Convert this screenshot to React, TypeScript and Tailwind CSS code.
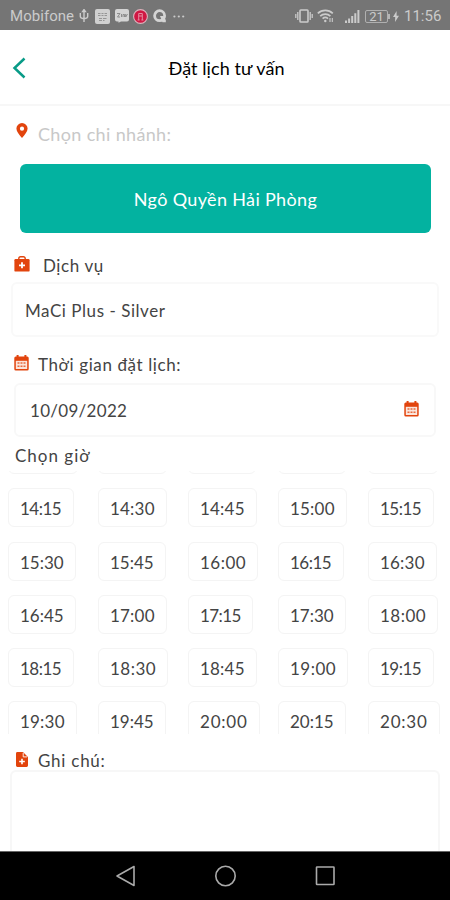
import type { ReactNode } from "react";
import clsx from "clsx";

interface Slot {
  readonly time: string;
  readonly size: string;
}

const XS = "w-[65px] tracking-[-0.6px]";
const SM = "w-[66px] tracking-[-0.5px]";
const MD = "w-[68px] tracking-[0px]";
const LG = "w-[69px] tracking-[0.2px]";
const XL = "w-[70px] tracking-[0.5px]";
const XXL = "w-[72px] tracking-[0.8px]";

const SLOT_ROWS: readonly (readonly Slot[])[] = [
  [
    { time: "", size: XL },
    { time: "", size: LG },
    { time: "", size: MD },
    { time: "", size: MD },
    { time: "", size: XL },
  ],
  [
    { time: "14:15", size: SM },
    { time: "14:30", size: LG },
    { time: "14:45", size: LG },
    { time: "15:00", size: LG },
    { time: "15:15", size: SM },
  ],
  [
    { time: "15:30", size: MD },
    { time: "15:45", size: MD },
    { time: "16:00", size: XL },
    { time: "16:15", size: SM },
    { time: "16:30", size: LG },
  ],
  [
    { time: "16:45", size: MD },
    { time: "17:00", size: LG },
    { time: "17:15", size: XS },
    { time: "17:30", size: MD },
    { time: "18:00", size: XL },
  ],
  [
    { time: "18:15", size: SM },
    { time: "18:30", size: XL },
    { time: "18:45", size: LG },
    { time: "19:00", size: XL },
    { time: "19:15", size: SM },
  ],
  [
    { time: "19:30", size: LG },
    { time: "19:45", size: MD },
    { time: "20:00", size: XXL },
    { time: "20:15", size: MD },
    { time: "20:30", size: XXL },
  ],
];

function StatusBar() {
  return (
    <header className="flex h-[30px] items-center bg-[#757575] pt-0.5 pl-[10px] font-[Roboto,sans-serif] text-[#cbcbcb]">
      <span className="w-[66px] text-[15px] leading-none tracking-[0.05px] whitespace-nowrap">Mobifone</span>
      <svg className="ml-[3px] h-[14px] w-[10px]" viewBox="0 0 10 14" fill="none" stroke="currentColor" strokeWidth="1.4">
        <path d="M5 1v12M1.3 4v3.5c0 1.5 1.5 2 3.7 2.3 2.2-.3 3.7-.8 3.7-2.3V4" />
        <path d="M3.6 2.6 5 .6l1.4 2z" fill="currentColor" />
      </svg>
      <svg className="ml-[6px] h-[15px] w-[15px]" viewBox="0 0 15 15">
        <rect width="15" height="15" rx="2" fill="#d0d0d0" />
        <path d="M3 4.5h2.5M6.5 4.5h2M9.5 4.5H12M3 6.5h2.5M6.5 6.5h2M9.5 6.5H12M4 9.5h3M4 11.5h3M8 9.5h3.5M8 11.5h1.5" stroke="#959595" strokeWidth="1.1" />
      </svg>
      <svg className="ml-[5px] h-[14px] w-[14px]" viewBox="0 0 14 14">
        <path d="M2 0h10a2 2 0 0 1 2 2v8.5a2 2 0 0 1-2 2H6l-2.5 1.3v-1.3H2a2 2 0 0 1-2-2V2a2 2 0 0 1 2-2z" fill="#d4d4d4" />
        <path d="M2 4.5h3L2.5 8H5M6.5 5v3M8 8V5.5h1.5V8M10.7 5v3L12.5 5" stroke="#858585" strokeWidth=".9" fill="none" />
      </svg>
      <svg className="ml-[4px] h-[15px] w-[15px]" viewBox="0 0 15 15">
        <circle cx="7.5" cy="7.5" r="6.9" fill="#cf1843" stroke="#dbb5be" strokeWidth="1.1" />
        <path d="M5.7 11V4.5h3.6V11M4.6 11h2M8.4 11h2M5.7 7h3.6" stroke="#e58ca1" strokeWidth="1" fill="none" />
      </svg>
      <svg className="ml-[5px] h-[14px] w-[14px]" viewBox="0 0 14 14">
        <circle cx="6.6" cy="6.7" r="5" fill="none" stroke="#d4d4d4" strokeWidth="2.8" />
        <path d="M7 7h3.2l2.6 4v2.3H9.5z" fill="#d4d4d4" />
      </svg>
      <svg className="ml-[6px] h-[3px] w-[12px]" viewBox="0 0 12 3" fill="currentColor">
        <circle cx="1.4" cy="1.5" r="1.1" />
        <circle cx="5.8" cy="1.5" r="1.1" />
        <circle cx="10.2" cy="1.5" r="1.1" />
      </svg>
      <svg className="ml-[110px] h-[14px] w-[18px]" viewBox="0 0 18 14" fill="none" stroke="currentColor" strokeWidth="1.6">
        <rect x="5" y="1" width="8" height="12" rx=".8" />
        <path d="M2.8 3v8M.8 5v4M15.2 3v8M17.2 5v4" strokeWidth="1.3" />
      </svg>
      <svg className="ml-[4px] h-[14px] w-[17px]" viewBox="0 0 17 14" fill="none" stroke="currentColor" strokeWidth="1.7">
        <path d="M.8 4.4a11 11 0 0 1 15 0M3.2 7.1a7.4 7.4 0 0 1 10.2 0M5.6 9.7a4 4 0 0 1 5.4 0" />
        <circle cx="8.3" cy="12" r="1.2" fill="currentColor" stroke="none" />
        <path d="M13 9v4M15.3 9v4" strokeWidth="1.1" />
      </svg>
      <svg className="ml-[11px] h-[13px] w-[15px]" viewBox="0 0 15 13" fill="currentColor">
        <path d="M0 10.5h2V13H0zM3.1 8.5h2V13h-2zM6.2 6h2v7h-2zM9.3 3.2h2V13h-2zM12.4 0h2v13h-2z" />
      </svg>
      <div className="ml-[5px] flex h-[13px] w-[23px] items-center justify-center rounded-[2px] border border-[#b0b0b0] text-[13px] leading-none">
        21
      </div>
      <div className="h-[5px] w-[2px] bg-[#b5b5b5]" />
      <svg className="ml-[3px] h-[11px] w-[6px]" viewBox="0 0 6 11" fill="currentColor">
        <path d="M3.6 0 0 6h2.2L2 11l4-6.3H3.6z" />
      </svg>
      <span className="ml-[5px] text-[15px] leading-none">11:56</span>
    </header>
  );
}

function PinIcon() {
  return (
    <svg className="h-[15px] w-[12px]" viewBox="0 0 12 15" fill="#e2440d">
      <path fillRule="evenodd" d="M6 0a5.6 5.6 0 0 0-5.6 5.6C.4 8.6 3 11.7 6 15c3-3.3 5.6-6.4 5.6-9.4A5.6 5.6 0 0 0 6 0zm0 3.6a2.1 2.1 0 1 1 0 4.2 2.1 2.1 0 0 1 0-4.2z" />
    </svg>
  );
}

function MedkitIcon() {
  return (
    <svg className="h-[16px] w-[16px]" viewBox="0 0 16 16">
      <path d="M4.8 4.2V2.6A1.8 1.8 0 0 1 6.6.8h2.8a1.8 1.8 0 0 1 1.8 1.8v1.6" fill="none" stroke="#e2440d" strokeWidth="1.4" />
      <rect x=".4" y="3" width="15.2" height="12.6" rx="1.2" fill="#e2440d" />
      <path d="M8 6.3v6M5 9.3h6" stroke="#fff" strokeWidth="1.8" />
    </svg>
  );
}

function CalendarIcon() {
  return (
    <svg className="h-[16px] w-[15px]" viewBox="0 0 15 16">
      <path d="M2.6 0h2v1.5h5.8V0h2v1.5h.8A1.5 1.5 0 0 1 14.7 3v11a1.5 1.5 0 0 1-1.5 1.5H1.8A1.5 1.5 0 0 1 .3 14V3a1.5 1.5 0 0 1 1.5-1.5h.8z" fill="#e2440d" />
      <path d="M1.8 5.8h11.4V14H1.8z" fill="#fbe5dc" />
      <path d="M3.5 8h2M6.5 8h2M9.5 8h2M3.5 11.3h2M6.5 11.3h2M9.5 11.3h2" stroke="#e8693d" strokeWidth="1.5" />
    </svg>
  );
}

function NoteIcon() {
  return (
    <svg className="h-[15px] w-[12px]" viewBox="0 0 12 15">
      <path d="M1.4 0H7l5 5v8.6a1.4 1.4 0 0 1-1.4 1.4H1.4A1.4 1.4 0 0 1 0 13.6V1.4A1.4 1.4 0 0 1 1.4 0z" fill="#e2440d" />
      <path d="M7.2.8v4.1h4" fill="none" stroke="#fff" strokeWidth=".9" />
      <path d="M6 6.7v5.6M3.2 9.5h5.6" stroke="#fff" strokeWidth="1.6" />
    </svg>
  );
}

interface FieldLabelProps {
  readonly icon: ReactNode;
  readonly children: ReactNode;
  readonly className?: string;
}

function FieldLabel({ icon, children, className }: FieldLabelProps) {
  return (
    <div className={clsx("flex h-6 shrink-0 items-center text-[17px] leading-6 whitespace-nowrap", className)}>
      {icon}
      {children}
    </div>
  );
}

function TimeSlots() {
  return (
    <div className="h-[263px] shrink-0 overflow-hidden">
      <div className="-mt-[36px] flex flex-col gap-[14.3px] pl-2">
        {SLOT_ROWS.map((row, i) => (
          <div key={i} className="grid grid-cols-[repeat(5,90px)]">
            {row.map((slot, j) => (
              <div
                key={j}
                className={clsx(
                  "flex h-[39px] items-center rounded-md border border-[#f4f4f4] pt-[2px] pl-[11px] text-[17px] leading-none",
                  slot.size,
                )}
              >
                {slot.time}
              </div>
            ))}
          </div>
        ))}
      </div>
    </div>
  );
}

function NavBar() {
  return (
    <nav className="flex h-[49px] shrink-0 items-center border-t border-[#666] bg-black pl-[115px]">
      <svg className="h-[22px] w-[222px]" viewBox="0 0 222 22" fill="none" stroke="#aaa" strokeWidth="1.6" strokeLinejoin="round">
        <path d="M19 1.5v19L2 11z" />
        <circle cx="110.5" cy="11" r="9.7" />
        <rect x="201.5" y="2" width="17.5" height="17.5" rx=".5" />
      </svg>
    </nav>
  );
}

export default function App() {
  return (
    <div className="flex h-[900px] w-[450px] flex-col overflow-hidden bg-white font-[Lato,sans-serif] text-[#444]">
      <StatusBar />
      <div className="grid h-[76px] shrink-0 grid-cols-[60px_1fr_60px] items-center border-b-2 border-[#f7f7f7] pt-[2px]">
        <svg className="ml-[12px] h-[22px] w-[14px]" viewBox="0 0 14 22" fill="none" stroke="#089b87" strokeWidth="2.5">
          <path d="M12.5 1.5 2.5 11l10 9.5" />
        </svg>
        <h1 className="pl-[3px] text-center text-[18px] leading-6 tracking-[0.08px] text-black">Đặt lịch tư vấn</h1>
      </div>

      <main className="flex flex-1 flex-col overflow-hidden">
        <FieldLabel className="mt-[16px] pl-[16px] text-[#c8c8c8]" icon={<div className="mb-[8px]"><PinIcon /></div>}>
          <span className="ml-[10px] text-[18px] tracking-[0.35px]">Chọn chi nhánh:</span>
        </FieldLabel>
        <button className="mx-[20px] mt-[18px] h-[69px] w-[411px] shrink-0 rounded-md bg-[#03b2a0] pt-[2px] text-[18px] tracking-[0.35px] text-white">
          Ngô Quyền Hải Phòng
        </button>

        <FieldLabel className="mt-[21px] pl-[14px]" icon={<div className="mb-[4px]"><MedkitIcon /></div>}>
          <span className="ml-[13px] tracking-[0.6px]">Dịch vụ</span>
        </FieldLabel>
        <div className="mx-[11px] mt-[4px] flex h-[55px] shrink-0 items-center rounded-md border-2 border-[#f9f9f9] pt-[3px] pl-[12px] text-[17px] tracking-[0.55px]">
          MaCi Plus - Silver
        </div>

        <FieldLabel className="mt-[16px] pl-[14px]" icon={<div className="mb-[4px]"><CalendarIcon /></div>}>
          <span className="ml-[9px] tracking-[0.6px]">Thời gian đặt lịch:</span>
        </FieldLabel>
        <div className="mx-[14px] mt-[6px] flex h-[54px] shrink-0 items-center justify-between rounded-md border-2 border-[#f8f8f8] pr-[15px] pl-[14px] text-[17px] tracking-[0.3px]">
          <span className="pt-[1px]">10/09/2022</span>
          <div className="mb-[2px]"><CalendarIcon /></div>
        </div>

        <div className="mt-[7px] mb-[3px] h-6 shrink-0 pl-[15px] text-[17px] leading-6 tracking-[1px]">Chọn giờ</div>
        <TimeSlots />

        <FieldLabel className="mt-[15px] pl-[16px]" icon={<div className="mb-[3px]"><NoteIcon /></div>}>
          <span className="ml-[10px] tracking-[0.75px]">Ghi chú:</span>
        </FieldLabel>
        <div className="mx-[10px] -mt-[3px] h-[90px] shrink-0 rounded-t-md border-2 border-b-0 border-[#f7f7f7]" />
      </main>
      <NavBar />
    </div>
  );
}
